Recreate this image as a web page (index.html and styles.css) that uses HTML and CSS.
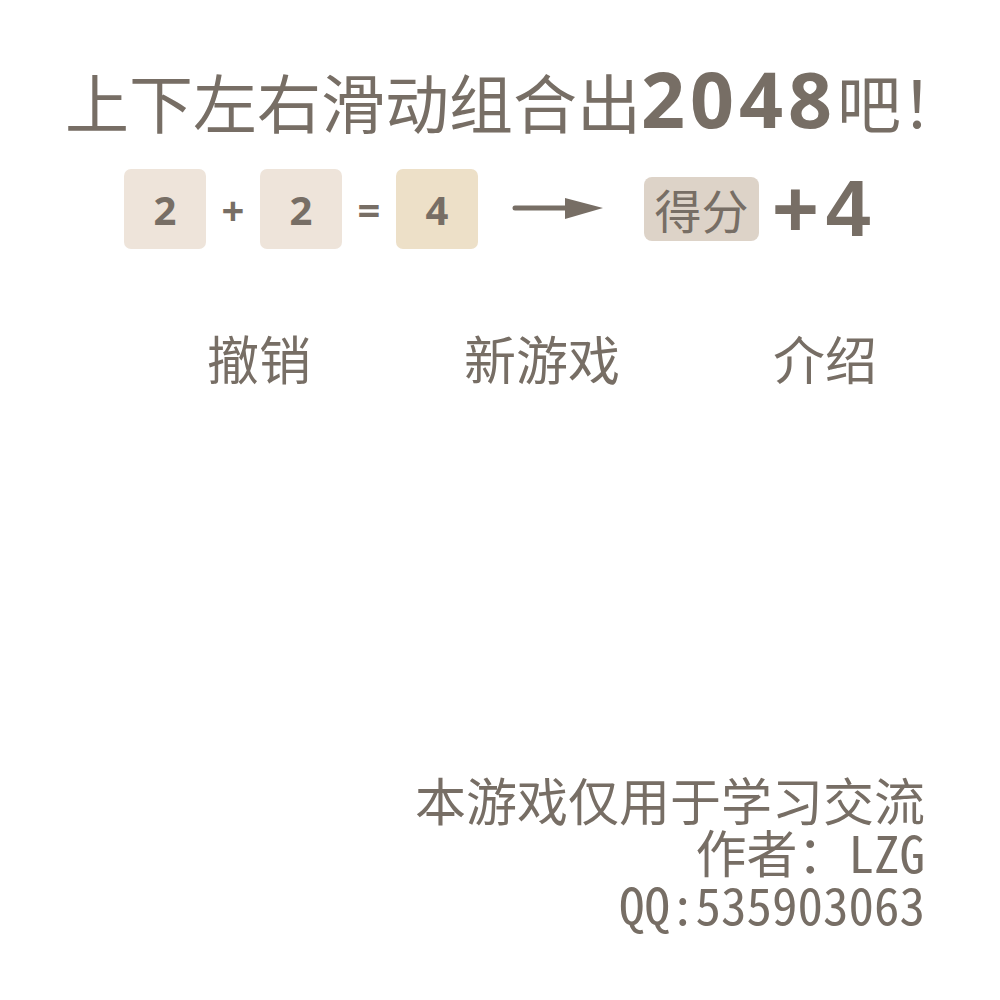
FILE: index.html
```html
<!DOCTYPE html>
<html lang="zh">
<head>
<meta charset="utf-8">
<title>2048</title>
<link rel="stylesheet" href="styles.css">
</head>
<body>
<div class="page">
  <h1 class="title">上下左右滑动组合出<span class="num">2048</span>吧！</h1>
  <div class="demo">
    <div class="tile t2">2</div>
    <div class="op">+</div>
    <div class="tile t2">2</div>
    <div class="op">=</div>
    <div class="tile t4">4</div>
    <svg class="arrow" width="92" height="24" viewBox="0 0 92 24">
      <line x1="3" y1="11" x2="56" y2="11" stroke="#776e65" stroke-width="5" stroke-linecap="round"/>
      <polygon points="53,1 91,11 53,22" fill="#776e65"/>
    </svg>
    <div class="badge">得分</div>
    <div class="plus">+4</div>
  </div>
  <div class="buttons">
    <div class="btn">撤销</div>
    <div class="btn">新游戏</div>
    <div class="btn">介绍</div>
  </div>
  <div class="footer">
    <div>本游戏仅用于学习交流</div>
    <div>作者：LZG</div>
    <div>QQ:535903063</div>
  </div>
</div>
</body>
</html>
```
FILE: styles.css
```css
html, body {
  margin: 0;
  padding: 0;
  background: #ffffff;
}
body {
  font-family: "Noto Sans CJK SC", "Noto Sans", sans-serif;
  color: #776e65;
}
.page {
  width: 1000px;
  height: 1000px;
  display: flex;
  flex-direction: column;
}
.title {
  margin: 67px 0 0 0;
  padding-left: 65px;
  font-size: 64px;
  line-height: 64px;
  font-weight: 400;
  text-align: left;
  white-space: nowrap;
}
.num {
  font-family: "Open Sans", sans-serif;
  font-weight: 700;
  font-size: 77px;
  letter-spacing: 5px;
}
.demo {
  margin-top: 37px;
  height: 80px;
  padding-left: 124px;
  display: flex;
  align-items: center;
}
.tile {
  width: 82px;
  height: 80px;
  border-radius: 7px;
  display: flex;
  align-items: center;
  justify-content: center;
  font-family: "Open Sans", sans-serif;
  font-weight: 700;
  font-size: 40px;
}
.t2 { background: #eee4da; }
.t4 { background: #ede0c8; }
.op {
  width: 54px;
  text-align: center;
  font-family: "Open Sans", sans-serif;
  font-weight: 700;
  font-size: 40px;
}
.arrow {
  margin-left: 34px;
  display: block;
}
.badge {
  margin-left: 40px;
  width: 115px;
  height: 64px;
  border-radius: 8px;
  background: #ddd3c8;
  font-size: 47px;
  line-height: 64px;
  text-align: center;
}
.plus {
  margin-left: 13px;
  font-family: "Liberation Sans", sans-serif;
  font-weight: 700;
  font-size: 80px;
  letter-spacing: 7px;
}
.buttons {
  margin-top: 83px;
  padding-left: 207px;
  display: flex;
  gap: 153px;
}
.btn {
  font-size: 52px;
  line-height: 51px;
}
.footer {
  margin-top: 390px;
  padding-right: 75px;
  text-align: right;
  font-family: "Noto Sans Mono CJK SC", "DejaVu Sans Mono", monospace;
  font-size: 51px;
  line-height: 52px;
}
```
